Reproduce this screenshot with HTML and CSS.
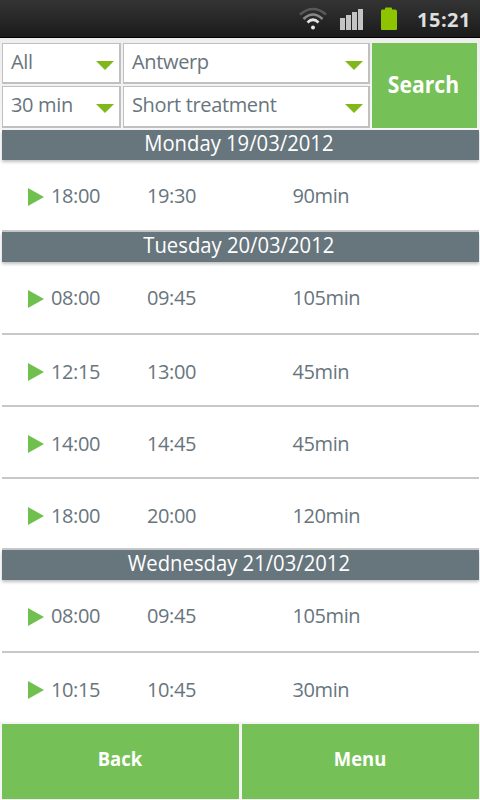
FILE: index.html
```html
<!DOCTYPE html>
<html>
<head>
  <meta charset="utf-8">
  <title>Appointments</title>
  <link rel="stylesheet" href="styles.css">
</head>
<body>
  <div class="statusbar">
    <svg class="wifi" width="30" height="24" viewBox="0 0 30 24" fill="none" stroke-width="2.6">
      <path d="M2 7.500Q15 -3.500 28 7.500" stroke="#585858"/>
      <path d="M5.500 12Q15 3 24.500 12" stroke="#888"/>
      <path d="M9.500 15.500Q15 10 20.500 15.500" stroke="#e4e4e4"/>
      <circle cx="15" cy="20.500" r="2" fill="#e8e8e8"/>
    </svg>
    <svg class="signal" width="24" height="22" viewBox="0 0 24 22" fill="#c4c4c4">
      <rect x="0" y="10" width="5" height="12"/>
      <rect x="6" y="7" width="5" height="15"/>
      <rect x="12" y="4" width="5" height="18"/>
      <rect x="18" y="1" width="5" height="21"/>
    </svg>
    <svg class="battery" width="18" height="24" viewBox="0 0 18 24">
      <path d="M2 2.500H5V1.500Q5 .5 6 .5H11Q12 .5 12 1.500V2.500H15Q17 2.500 17 4.500V22Q17 23 16 23H2Q1 23 1 22V4.500Q1 2.500 2 2.500Z" fill="#8dc400"/>
    </svg>
    <span class="clock">15:21</span>
  </div>

  <div class="filters">
    <div class="select"><span>All</span></div>
    <div class="select"><span>Antwerp</span></div>
    <button class="search"><span>Search</span></button>
    <div class="select"><span>30 min</span></div>
    <div class="select"><span>Short treatment</span></div>
  </div>

  <div class="list">
    <h2><span>Monday 19/03/2012</span></h2>
    <div class="row"><i></i><span>18:00</span><span>19:30</span><span>90min</span></div>
    <h2><span>Tuesday 20/03/2012</span></h2>
    <div class="row first"><i></i><span>08:00</span><span>09:45</span><span>105min</span></div>
    <div class="row"><i></i><span>12:15</span><span>13:00</span><span>45min</span></div>
    <div class="row"><i></i><span>14:00</span><span>14:45</span><span>45min</span></div>
    <div class="row last"><i></i><span>18:00</span><span>20:00</span><span>120min</span></div>
    <h2><span>Wednesday 21/03/2012</span></h2>
    <div class="row first"><i></i><span>08:00</span><span>09:45</span><span>105min</span></div>
    <div class="row end"><i></i><span>10:15</span><span>10:45</span><span>30min</span></div>
  </div>

  <div class="footer">
    <button><span>Back</span></button>
    <button><span>Menu</span></button>
  </div>
</body>
</html>
```
FILE: styles.css
```css
* {
  box-sizing: border-box;
}

body {
  margin: 0;
  width: 480px;
  height: 800px;
  overflow: hidden;
  display: flex;
  flex-direction: column;
  background: #fff;
  color: #68757d;
  font-family: "Open Sans", "Noto Sans", sans-serif;
  font-size: 20px;
  letter-spacing: -0.4px;
}

.statusbar {
  height: 38px;
  flex: none;
  display: flex;
  align-items: flex-start;
  justify-content: flex-end;
  padding: 7px 9px 0 0;
  background: linear-gradient(#343434, #1b1b1b);
  border-bottom: 1px solid #000;
}

.wifi {
  margin-right: 12px;
}

.signal {
  margin: 1px 16px 0 0;
}

.battery {
  margin-right: 19px;
}

.clock {
  color: #dedede;
  font-weight: bold;
  line-height: 26px;
  letter-spacing: 0.5px;
}

.filters {
  height: 92px;
  flex: none;
  display: grid;
  grid-template-columns: 119px 247px 105px;
  grid-template-rows: 41px 42px;
  gap: 2px;
  padding: 5px 2px 2px;
  background: linear-gradient(#eee, #f6f6f6);
}

.select {
  display: flex;
  justify-content: space-between;
  align-items: flex-start;
  padding: 0 5px 0 8px;
  border: 1px solid #c0c0c0;
  border-right-width: 2px;
  border-bottom-width: 2px;
  background: #fff;
  line-height: 35px;
  letter-spacing: -0.35px;
}

.select::after {
  content: "";
  margin-top: 17px;
  border: 9px solid transparent;
  border-top-color: #80b81a;
  border-bottom: 0;
}

button {
  border: 0;
  padding: 0;
  background: #76c157;
  color: #fff;
  font-family: inherit;
  font-weight: bold;
}

button span,
h2 span {
  display: inline-block;
  transform: scaleX(0.92);
}

.search {
  grid-column: 3;
  grid-row: 1 / 3;
  font-size: 24px;
  padding: 0 3px 5px 0;
}

.search span {
  transform: scaleX(0.88);
}

.list {
  height: 592px;
  flex: none;
  padding: 0 1px 0 2px;
}

h2 {
  position: relative;
  height: 30px;
  margin: 0;
  background: #67757d;
  color: #fff;
  font-size: 22px;
  font-weight: normal;
  letter-spacing: 0;
  line-height: 25px;
  text-align: center;
  box-shadow: 0 2px 3px rgba(0, 0, 0, 0.25);
}

h2 span {
  margin-right: 4px;
}

.row {
  height: 72px;
  display: grid;
  grid-template-columns: 23px 96px 145.5px 1fr;
  align-items: start;
  padding: 22px 0 0 26px;
  line-height: 27px;
  border-bottom: 2px solid #c8c8c8;
}

.row + .row {
  padding-top: 23px;
}

.row.first {
  height: 73px;
}

.row.last {
  height: 71px;
}

.row.end {
  height: 69px;
  border-bottom: 0;
}

.row i {
  width: 0;
  border: 9px solid transparent;
  border-left: 16px solid #70c04f;
  border-right: 0;
  margin-top: 6px;
}

.row + .row i {
  margin-top: 5px;
}

.footer {
  height: 78px;
  flex: none;
  display: grid;
  grid-template-columns: 237px 237px;
  gap: 3px;
  padding: 2px 1px 1px 2px;
  background: #f4f4f4;
}

.footer button {
  font-size: 19px;
  padding: 0 1px 6px 0;
}

.footer span {
  transform: scaleX(0.97);
}
```
